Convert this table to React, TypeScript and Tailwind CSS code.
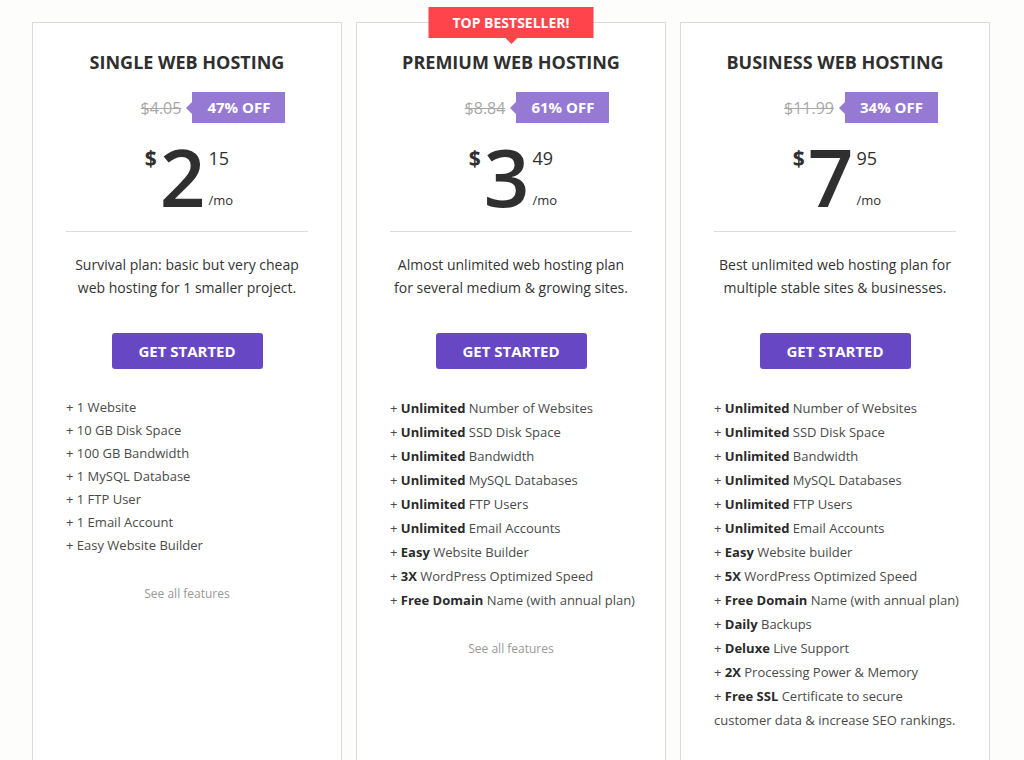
import { ReactNode } from 'react'

interface Plan {
  title: string
  oldPrice: string
  off: string
  whole: string
  cents: string
  description: [string, string]
  features: ReactNode[]
  lineClass: string
  bestseller?: boolean
  seeAll?: boolean
}

const B = ({ children }: { children: ReactNode }) => <b className="font-bold text-[#2a2a2a]">{children}</b>

const plans: Plan[] = [
  {
    title: 'SINGLE WEB HOSTING',
    oldPrice: '$4.05',
    off: '47% OFF',
    whole: '2',
    cents: '15',
    description: ['Survival plan: basic but very cheap', 'web hosting for 1 smaller project.'],
    lineClass: 'leading-[23px]',
    seeAll: true,
    features: [
      '1 Website',
      '10 GB Disk Space',
      '100 GB Bandwidth',
      '1 MySQL Database',
      '1 FTP User',
      '1 Email Account',
      'Easy Website Builder',
    ],
  },
  {
    title: 'PREMIUM WEB HOSTING',
    oldPrice: '$8.84',
    off: '61% OFF',
    whole: '3',
    cents: '49',
    description: ['Almost unlimited web hosting plan', 'for several medium & growing sites.'],
    lineClass: 'leading-[24px]',
    bestseller: true,
    seeAll: true,
    features: [
      <><B>Unlimited</B> Number of Websites</>,
      <><B>Unlimited</B> SSD Disk Space</>,
      <><B>Unlimited</B> Bandwidth</>,
      <><B>Unlimited</B> MySQL Databases</>,
      <><B>Unlimited</B> FTP Users</>,
      <><B>Unlimited</B> Email Accounts</>,
      <><B>Easy</B> Website Builder</>,
      <><B>3X</B> WordPress Optimized Speed</>,
      <><B>Free Domain</B> Name (with annual plan)</>,
    ],
  },
  {
    title: 'BUSINESS WEB HOSTING',
    oldPrice: '$11.99',
    off: '34% OFF',
    whole: '7',
    cents: '95',
    description: ['Best unlimited web hosting plan for', 'multiple stable sites & businesses.'],
    lineClass: 'leading-[24px]',
    features: [
      <><B>Unlimited</B> Number of Websites</>,
      <><B>Unlimited</B> SSD Disk Space</>,
      <><B>Unlimited</B> Bandwidth</>,
      <><B>Unlimited</B> MySQL Databases</>,
      <><B>Unlimited</B> FTP Users</>,
      <><B>Unlimited</B> Email Accounts</>,
      <><B>Easy</B> Website builder</>,
      <><B>5X</B> WordPress Optimized Speed</>,
      <><B>Free Domain</B> Name (with annual plan)</>,
      <><B>Daily</B> Backups</>,
      <><B>Deluxe</B> Live Support</>,
      <><B>2X</B> Processing Power &amp; Memory</>,
      <>
        <B>Free SSL</B> Certificate to secure
        <br />
        customer data &amp; increase SEO rankings.
      </>,
    ],
  },
]

function PlanCard({ plan }: { plan: Plan }) {
  return (
    <div className="relative w-[310px] h-[800px] shrink-0 border border-[#dadada] bg-white">
      {plan.bestseller && (
        <div className="absolute left-1/2 -translate-x-1/2 top-[-16px] h-[31px] w-[165px] bg-[#ff454b] flex items-center justify-center text-white text-[14px] font-bold">
          TOP BESTSELLER!
          <span className="absolute left-1/2 -translate-x-1/2 bottom-[-6px] w-0 h-0 border-x-[6px] border-x-transparent border-t-[6px] border-t-[#ff454b]" />
        </div>
      )}

      <h2 className="pt-[27px] text-center text-[18px] leading-[24px] font-bold text-[#2f2f2f]">{plan.title}</h2>

      <div className="mt-[18px] flex justify-center items-center pl-[52px]">
        <span className="text-[16px] text-[#a8a8a8] line-through mr-[5px]">{plan.oldPrice}</span>
        <span className="w-0 h-0 border-y-[6px] border-y-transparent border-r-[6px] border-r-[#9679d3]" />
        <span className="h-[31px] px-[15px] bg-[#9679d3] text-white text-[15px] font-bold flex items-center">
          {plan.off}
        </span>
      </div>

      <div className="mt-[13px] flex justify-center items-start text-[#2f2f2f] pl-[4px]">
        <span className="mt-[12px] text-[21px] leading-[21px] font-bold mr-[3px]">$</span>
        <span className="text-[80px] leading-[80px] font-semibold">{plan.whole}</span>
        <div className="flex flex-col ml-[3px]">
          <span className="mt-[13px] text-[18px] leading-[18px]">{plan.cents}</span>
          <span className="mt-[27px] text-[13px] leading-[13px]">/mo</span>
        </div>
      </div>

      <div className="mx-[33px] mt-[15px] border-t border-[#dcdcdc]" />

      <p className="mt-[21px] text-center text-[14px] leading-[23px] text-[#333]">
        {plan.description[0]}
        <br />
        {plan.description[1]}
      </p>

      <div className="mt-[34px] flex justify-center">
        <button className="w-[151px] h-[36px] rounded-[3px] bg-[#6747c4] text-white text-[15px] font-bold">
          GET STARTED
        </button>
      </div>

      <ul className={`mt-[27px] pl-[33px] text-[13px] text-[#4a4a4a] whitespace-nowrap ${plan.lineClass}`}>
        {plan.features.map((f, i) => (
          <li key={i}>+ {f}</li>
        ))}
      </ul>

      {plan.seeAll && (
        <p className="mt-[29px] text-center text-[12px] leading-[16px] text-[#999]">See all features</p>
      )}
    </div>
  )
}

export default function App() {
  return (
    <div className="h-[760px] overflow-hidden bg-[#fdfdfc] pl-[32px] pt-[22px] flex gap-[14px] font-['Open_Sans',sans-serif]">
      {plans.map((p) => (
        <PlanCard key={p.title} plan={p} />
      ))}
    </div>
  )
}
